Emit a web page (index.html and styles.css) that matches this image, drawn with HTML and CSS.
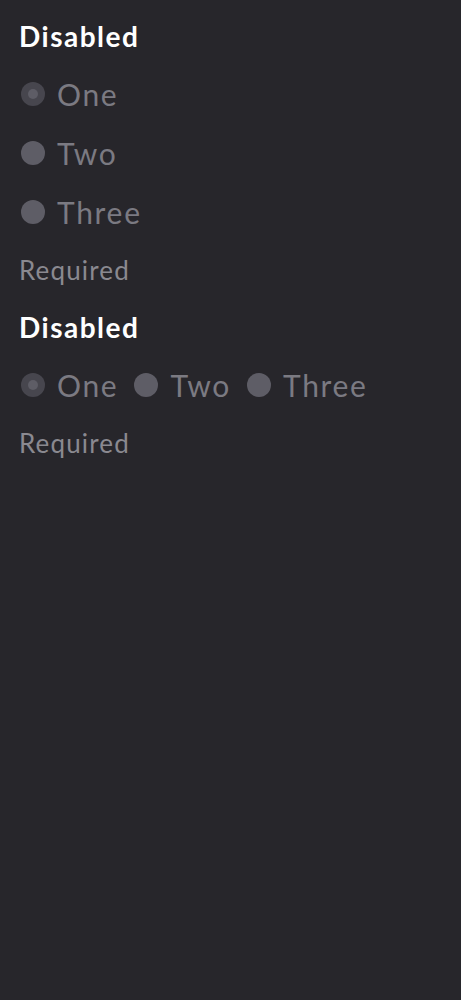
FILE: index.html
```html
<!DOCTYPE html>
<html>
<head>
<meta charset="utf-8">
<link rel="stylesheet" href="styles.css">
</head>
<body>
<div class="page">
  <fieldset class="group">
    <legend class="label">Disabled</legend>
    <div class="options vertical">
      <label class="option"><span class="radio checked"></span><span class="text">One</span></label>
      <label class="option"><span class="radio"></span><span class="text">Two</span></label>
      <label class="option"><span class="radio"></span><span class="text">Three</span></label>
    </div>
    <div class="hint">Required</div>
  </fieldset>
  <fieldset class="group">
    <legend class="label">Disabled</legend>
    <div class="options horizontal">
      <label class="option"><span class="radio checked"></span><span class="text">One</span></label>
      <label class="option"><span class="radio"></span><span class="text">Two</span></label>
      <label class="option"><span class="radio"></span><span class="text">Three</span></label>
    </div>
    <div class="hint">Required</div>
  </fieldset>
</div>
</body>
</html>
```
FILE: styles.css
```css
html, body {
  margin: 0;
  padding: 0;
  background: #27262b;
  height: 100%;
}
body {
  font-family: Lato, "Open Sans", sans-serif;
}
.page {
  padding: 18px 19px;
  display: flex;
  flex-direction: column;
  gap: 23px;
}
.group {
  border: 0;
  margin: 0;
  padding: 0;
  min-width: 0;
  display: flex;
  flex-direction: column;
}
.label {
  padding: 0;
  font-weight: 700;
  font-size: 28px;
  letter-spacing: 1.5px;
  line-height: 36px;
  color: #ffffff;
  float: left;
  width: 100%;
}
.options {
  display: flex;
  margin-top: 22px;
}
.options.vertical {
  flex-direction: column;
  gap: 23px;
}
.options.horizontal {
  flex-direction: row;
  gap: 16px;
}
.option {
  display: flex;
  align-items: center;
  gap: 12px;
  height: 36px;
}
.radio {
  width: 24px;
  height: 24px;
  border-radius: 50%;
  background: #5e5d66;
  display: flex;
  align-items: center;
  justify-content: center;
  flex: none;
}
.options .option:first-child .radio,
.options.vertical .option .radio { margin-left: 2px; }
.radio.checked {
  background: #47464e;
}
.radio.checked::after {
  content: "";
  width: 10px;
  height: 10px;
  border-radius: 50%;
  background: #5e5d66;
}
.text {
  font-size: 30px;
  letter-spacing: 1.7px;
  line-height: 36px;
  color: #7b7a82;
}
.hint {
  margin-top: 24px;
  font-size: 26px;
  letter-spacing: 1.15px;
  line-height: 32px;
  color: #8a8990;
}
```
